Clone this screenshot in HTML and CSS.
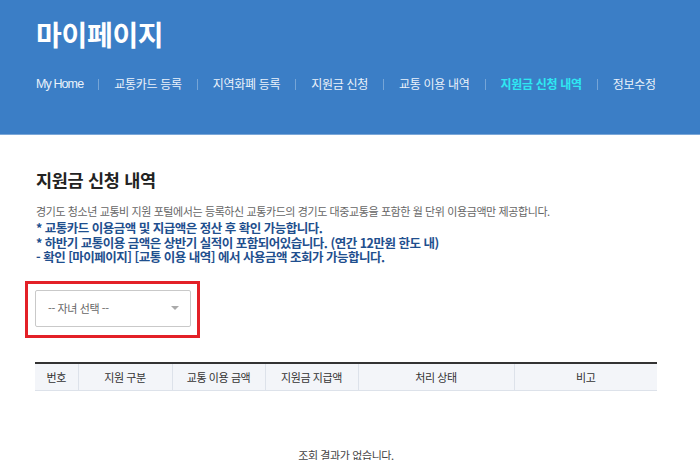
FILE: index.html
```html
<!DOCTYPE html>
<html lang="ko">
<head>
<meta charset="utf-8">
<title>마이페이지</title>
<link rel="stylesheet" href="styles.css">
</head>
<body>
<header class="top">
  <h1 class="top-title">마이페이지</h1>
  <nav class="nav">
    <a class="nav-item nav-home">My Home</a><span class="nav-sep"></span>
    <a class="nav-item">교통카드 등록</a><span class="nav-sep"></span>
    <a class="nav-item">지역화폐 등록</a><span class="nav-sep"></span>
    <a class="nav-item">지원금 신청</a><span class="nav-sep"></span>
    <a class="nav-item">교통 이용 내역</a><span class="nav-sep"></span>
    <a class="nav-item nav-active">지원금 신청 내역</a><span class="nav-sep"></span>
    <a class="nav-item">정보수정</a>
  </nav>
</header>
<main class="content">
  <h2 class="sec-title">지원금 신청 내역</h2>
  <p class="desc">경기도 청소년 교통비 지원 포털에서는 등록하신 교통카드의 경기도 대중교통을 포함한 월 단위 이용금액만 제공합니다.</p>
  <ul class="notes">
    <li>* 교통카드 이용금액 및 지급액은 정산 후 확인 가능합니다.</li>
    <li>* 하반기 교통이용 금액은 상반기 실적이 포함되어있습니다. (연간 12만원 한도 내)</li>
    <li>- 확인 [마이페이지] [교통 이용 내역] 에서 사용금액 조회가 가능합니다.</li>
  </ul>
  <div class="highlight">
    <div class="select">
      <span class="select-text">-- 자녀 선택 --</span>
      <span class="select-arrow"></span>
    </div>
  </div>
  <table class="grid">
    <thead>
      <tr>
        <th class="c1">번호</th>
        <th class="c2">지원 구분</th>
        <th class="c3">교통 이용 금액</th>
        <th class="c4">지원금 지급액</th>
        <th class="c5">처리 상태</th>
        <th class="c6">비고</th>
      </tr>
    </thead>
    <tbody>
      <tr><td class="empty" colspan="6">조회 결과가 없습니다.</td></tr>
    </tbody>
  </table>
</main>
</body>
</html>
```
FILE: styles.css
```css
* { box-sizing: border-box; }
html, body { margin: 0; padding: 0; }
html { height: 460px; overflow: hidden; }
body {
  font-family: "Noto Sans CJK KR", "Noto Sans", sans-serif;
  color: #333;
  background: #fff;
  width: 700px;
  height: 460px;
  overflow: hidden;
}
.top {
  height: 135px;
  background: #3b7ec6;
  border-bottom: 1px solid #7ba7d8;
  padding: 14px 0 0 36px;
}
.top-title {
  margin: 0;
  font-size: 28px;
  line-height: 40px;
  font-weight: 700;
  color: #fff;
  letter-spacing: -0.3px;
}
.nav {
  display: flex;
  align-items: center;
  gap: 15px;
  margin-top: 21px;
  height: 18px;
}
.nav-item {
  font-size: 12px;
  letter-spacing: -0.3px;
  color: #eaf2fb;
  white-space: nowrap;
  line-height: 18px;
}
.nav-home {
  font-family: "Liberation Sans", sans-serif;
  letter-spacing: -0.9px;
  font-size: 12.5px;
}
.nav-active {
  color: #2ee8f2;
  font-weight: 700;
  letter-spacing: -0.3px;
}
.nav-sep {
  width: 1px;
  height: 11px;
  background: rgba(255,255,255,0.3);
}
.content {
  padding: 0 0 0 35px;
}
.sec-title {
  margin: 33px 0 0 1px;
  font-size: 17.5px;
  line-height: 24px;
  font-weight: 700;
  color: #222;
  letter-spacing: -0.3px;
}
.desc {
  margin: 11px 0 0 1px;
  font-size: 11px;
  line-height: 16px;
  color: #666;
  letter-spacing: -0.4px;
  white-space: nowrap;
}
.notes {
  list-style: none;
  margin: 2px 0 0 1px;
  padding: 0;
  font-size: 12.5px;
  line-height: 14.5px;
  font-weight: 700;
  color: #1f4f8e;
  letter-spacing: -0.5px;
}
.highlight {
  margin: 16px 0 0 -10px;
  width: 175px;
  height: 57px;
  border: 3px solid #e32027;
  padding: 6px 6px 8px 7px;
}
.select {
  height: 37px;
  border: 1px solid #c9c9c9;
  border-radius: 2px;
  display: flex;
  align-items: center;
  justify-content: space-between;
  padding: 0 11px 0 12px;
}
.select-text {
  font-size: 11px;
  color: #666;
  letter-spacing: -0.4px;
}
.select-arrow {
  width: 0;
  height: 0;
  border-left: 4px solid transparent;
  border-right: 4px solid transparent;
  border-top: 4px solid #aaa;
}
.grid {
  margin-top: 24px;
  width: 622px;
  border-collapse: collapse;
  table-layout: fixed;
}
.grid th {
  height: 28px;
  background: #f3f5f9;
  border-top: 2px solid #333;
  border-bottom: 1px solid #dde2ea;
  border-left: 1px solid #dde2ea;
  font-size: 11px;
  font-weight: 400;
  color: #333;
  letter-spacing: -0.4px;
  padding: 0;
}
.grid th:first-child { border-left: none; }
.c1 { width: 43px; }
.c2 { width: 94px; }
.c3 { width: 93px; }
.c4 { width: 93px; }
.c5 { width: 156px; }
.c6 { width: 143px; }
.empty {
  text-align: center;
  font-size: 11px;
  color: #444;
  padding: 56px 0 20px;
  letter-spacing: -0.4px;
}
```
